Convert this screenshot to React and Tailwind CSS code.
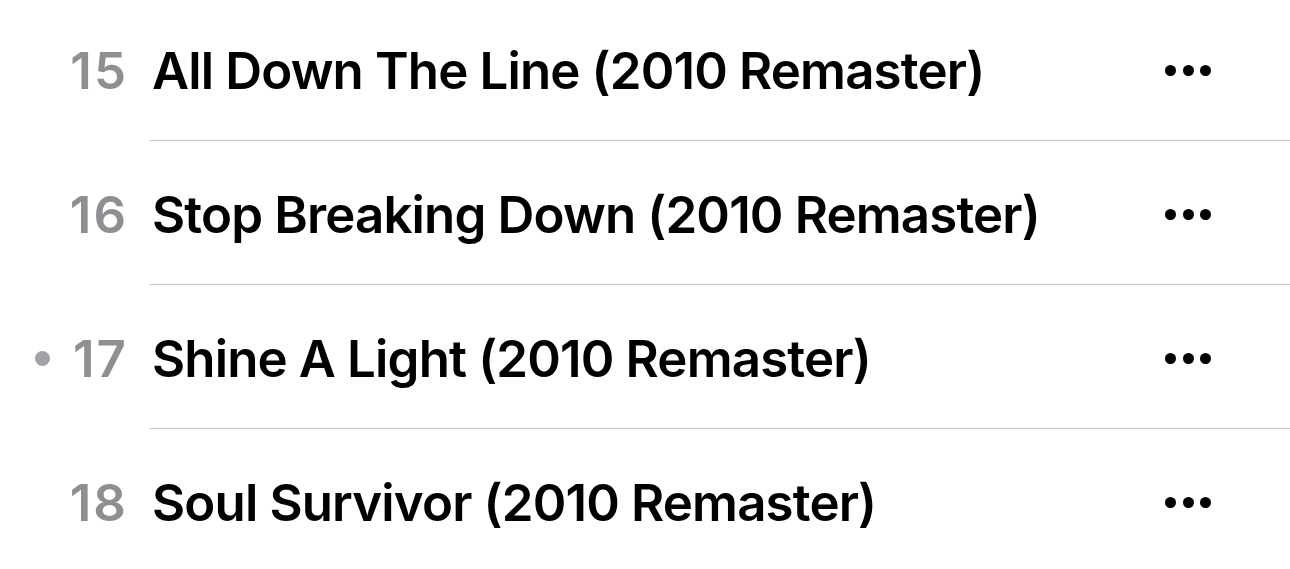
import React from "react";

const tracks = [
  { n: 15, title: "All Down The Line (2010 Remaster)" },
  { n: 16, title: "Stop Breaking Down (2010 Remaster)" },
  { n: 17, title: "Shine A Light (2010 Remaster)", playing: true },
  { n: 18, title: "Soul Survivor (2010 Remaster)" },
];

function Dots() {
  return (
    <div className="flex items-center gap-[6.5px]">
      <span className="block w-[11px] h-[11px] rounded-full bg-black" />
      <span className="block w-[11px] h-[11px] rounded-full bg-black" />
      <span className="block w-[11px] h-[11px] rounded-full bg-black" />
    </div>
  );
}

export default function App() {
  return (
    <div className="w-[1290px] h-[569px] overflow-hidden bg-white" style={{ fontFamily: "Inter, 'Liberation Sans', sans-serif" }}>
      {tracks.map((t, i) => (
        <div key={t.n} className="flex flex-col">
          <div className="h-[140px] flex items-center">
            <div className="w-[128px] flex items-center justify-end gap-[23px] shrink-0">
              {t.playing && <span className="block w-[15px] h-[15px] rounded-full bg-[#a1a1a6]" />}
              <span className="text-[51px] font-semibold text-[#8e8e93] leading-none tracking-[2px]">{t.n}</span>
            </div>
            <div className="ml-[24px] flex-1 text-[51px] font-semibold text-black leading-none tracking-[-0.85px] whitespace-nowrap">
              {t.title}
            </div>
            <div className="mr-[79px]">
              <Dots />
            </div>
          </div>
          {i < tracks.length - 1 && (
            <>
              <div className="ml-[150px] h-px bg-[#c6c6c8]" />
              <div className="h-[3px]" />
            </>
          )}
        </div>
      ))}
    </div>
  );
}
